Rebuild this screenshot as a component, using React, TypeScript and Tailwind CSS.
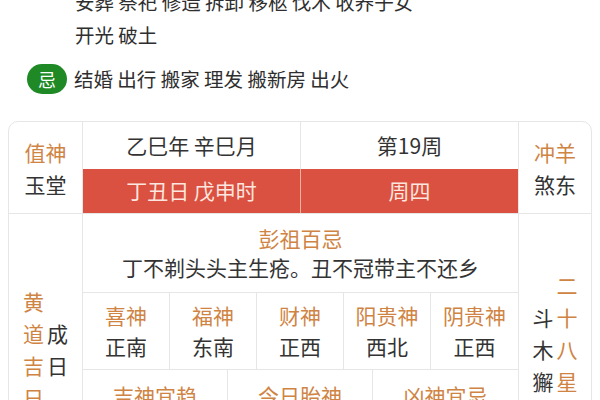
import React from "react";

const orange = "text-[#cf8444]";

function Almanac() {
  const gods = [
    { label: "喜神", value: "正南" },
    { label: "福神", value: "东南" },
    { label: "财神", value: "正西" },
    { label: "阳贵神", value: "西北" },
    { label: "阴贵神", value: "正西" },
  ];
  const bottom = [
    { label: "吉神宜趋", value: "天恩 母仓 时阳 生气" },
    { label: "今日胎神", value: "仓库厕外东南" },
    { label: "凶神宜忌", value: "五虚 九空 天牢" },
  ];

  return (
    <div className="ml-[8px] mt-[27px] w-[584px] border border-[#e6e6e6] rounded-[10px] overflow-hidden text-[21px] text-[#333]">
      {/* top row */}
      <div className="grid grid-cols-[74px_436px_1fr] border-b border-[#e6e6e6]">
        <div className="flex flex-col items-center justify-center leading-[32px] border-r border-[#e6e6e6]">
          <span className={orange}>值神</span>
          <span>玉堂</span>
        </div>
        <div className="grid grid-cols-[217px_1fr] border-r border-[#e6e6e6]">
          <div className="h-[47px] flex items-center justify-center">乙巳年 辛巳月</div>
          <div className="h-[47px] flex items-center justify-center border-l border-[#e6e6e6]">
            第19周
          </div>
          <div className="h-[44px] flex items-center justify-center bg-[#da5041] text-[#fde6df]">
            丁丑日 戊申时
          </div>
          <div className="h-[44px] flex items-center justify-center bg-[#da5041] text-[#fde6df] border-l border-[#f4b2a5]">
            周四
          </div>
        </div>
        <div className="flex flex-col items-center justify-center leading-[32px]">
          <span className={orange}>冲羊</span>
          <span>煞东</span>
        </div>
      </div>

      {/* main row */}
      <div className="grid grid-cols-[74px_436px_1fr]">
        <div className="flex items-center justify-center gap-[3px] border-r border-[#e6e6e6] leading-[32px]">
          <div className={`flex flex-col ${orange}`}>
            <span>黄</span>
            <span>道</span>
            <span>吉</span>
            <span>日</span>
          </div>
          <div className="flex flex-col">
            <span>成</span>
            <span>日</span>
          </div>
        </div>

        <div className="flex flex-col border-r border-[#e6e6e6]">
          <div className="h-[79px] flex flex-col items-center justify-center leading-[29px] border-b border-[#e6e6e6]">
            <span className={orange}>彭祖百忌</span>
            <span>丁不剃头头主生疮。丑不冠带主不还乡</span>
          </div>
          <div className="grid grid-cols-5 h-[77px] border-b border-[#e6e6e6]">
            {gods.map((g, i) => (
              <div
                key={i}
                className={`flex flex-col items-center justify-center leading-[31px] ${
                  i < 4 ? "border-r border-[#e6e6e6]" : ""
                }`}
              >
                <span className={orange}>{g.label}</span>
                <span>{g.value}</span>
              </div>
            ))}
          </div>
          <div className="grid grid-cols-3 h-[113px]">
            {bottom.map((b, i) => (
              <div
                key={i}
                className={`flex flex-col items-center py-[10px] leading-[31px] ${
                  i < 2 ? "border-r border-[#e6e6e6]" : ""
                }`}
              >
                <span className={orange}>{b.label}</span>
                <span className="text-[16px] leading-[24px] text-center px-2">{b.value}</span>
              </div>
            ))}
          </div>
        </div>

        <div className="flex items-center justify-center gap-[3px] leading-[32px]">
          <div className="flex flex-col">
            <span>斗</span>
            <span>木</span>
            <span>獬</span>
          </div>
          <div className={`flex flex-col ${orange}`}>
            <span>二</span>
            <span>十</span>
            <span>八</span>
            <span>星</span>
            <span>宿</span>
          </div>
        </div>
      </div>
    </div>
  );
}

export default function App() {
  return (
    <div
      className="w-[600px] h-[400px] overflow-hidden bg-white"
      style={{ fontFamily: '"Noto Sans CJK SC", "Noto Sans", sans-serif' }}
    >
      <div className="pl-[75px] mt-[-15px] text-[19.5px] leading-[33px] text-[#2e2e2e]">
        <div>安葬 祭祀 修造 拆卸 移柩 伐木 收养子女</div>
        <div>开光 破土</div>
      </div>
      <div className="flex items-center gap-[7px] pl-[27px] mt-[13px] h-[30px]">
        <span className="w-[40px] h-[30px] rounded-full bg-[#1f8a25] text-white text-[18px] flex items-center justify-center">
          忌
        </span>
        <span className="text-[19.5px] text-[#2e2e2e]">结婚 出行 搬家 理发 搬新房 出火</span>
      </div>
      <Almanac />
    </div>
  );
}
